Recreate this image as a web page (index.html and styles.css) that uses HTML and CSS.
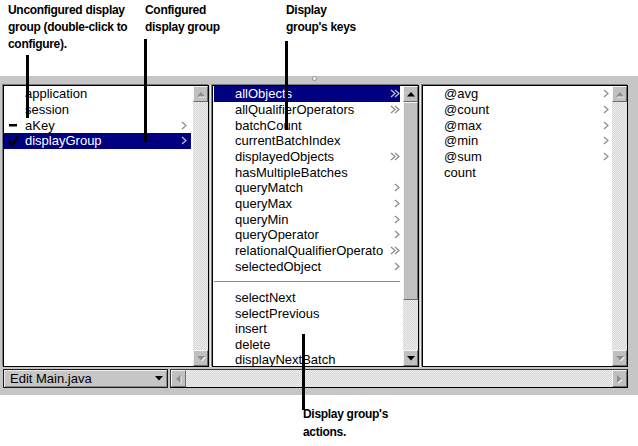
FILE: index.html
```html
<!DOCTYPE html>
<html>
<head>
<meta charset="utf-8">
<link rel="stylesheet" href="styles.css">
</head>
<body>
<header class="notes">
  <div class="note n1">Unconfigured display<br>group (double-click to<br>configure).</div>
  <div class="note n2">Configured<br>display group</div>
  <div class="note n3">Display<br>group's keys</div>
</header>

<main class="panel">
  <div class="knob-row"><span class="knob"></span></div>
  <div class="browser">
    <section class="list l1">
      <ul class="rows">
        <li class="row"><span class="mark"></span><span class="label">application</span></li>
        <li class="row"><span class="mark"></span><span class="label">session</span></li>
        <li class="row"><span class="mark"><svg width="14" height="12" viewBox="0 0 14 12"><rect x="1" y="5" width="8" height="2.5" fill="#000"/></svg></span><span class="label">aKey</span><svg class="arrow" width="6" height="9" viewBox="0 0 6 9"><path d="M1 1L5 4.5L1 8" fill="none" stroke="currentColor" stroke-width="1.2"/></svg></li>
        <li class="row sel"><span class="mark"><svg width="14" height="12" viewBox="0 0 14 12"><path d="M1 6.5L4 10.5L10 1" fill="none" stroke="#000" stroke-width="2.4"/></svg></span><span class="label">displayGroup</span><svg class="arrow" width="6" height="9" viewBox="0 0 6 9"><path d="M1 1L5 4.5L1 8" fill="none" stroke="currentColor" stroke-width="1.2"/></svg></li>
      </ul>
      <div class="vscroll">
        <div class="btn off"><svg width="8" height="5" viewBox="0 0 8 5"><polygon points="0,4.5 4,0 8,4.5"/></svg></div>
        <div class="track"></div>
        <div class="btn off"><svg width="8" height="5" viewBox="0 0 8 5"><polygon points="0,0 8,0 4,4.5"/></svg></div>
      </div>
    </section>
    <div class="split"></div>
    <section class="list l2">
      <ul class="rows">
        <li class="row sel"><span class="mark"></span><span class="label">allObjects</span><svg class="arrow dbl" width="10" height="9" viewBox="0 0 10 9"><path d="M1 1L5 4.5L1 8M5 1L9 4.5L5 8" fill="none" stroke="currentColor" stroke-width="1.2"/></svg></li>
        <li class="row"><span class="mark"></span><span class="label">allQualifierOperators</span><svg class="arrow dbl" width="10" height="9" viewBox="0 0 10 9"><path d="M1 1L5 4.5L1 8M5 1L9 4.5L5 8" fill="none" stroke="currentColor" stroke-width="1.2"/></svg></li>
        <li class="row"><span class="mark"></span><span class="label">batchCount</span></li>
        <li class="row"><span class="mark"></span><span class="label">currentBatchIndex</span></li>
        <li class="row"><span class="mark"></span><span class="label">displayedObjects</span><svg class="arrow dbl" width="10" height="9" viewBox="0 0 10 9"><path d="M1 1L5 4.5L1 8M5 1L9 4.5L5 8" fill="none" stroke="currentColor" stroke-width="1.2"/></svg></li>
        <li class="row"><span class="mark"></span><span class="label">hasMultipleBatches</span></li>
        <li class="row"><span class="mark"></span><span class="label">queryMatch</span><svg class="arrow" width="6" height="9" viewBox="0 0 6 9"><path d="M1 1L5 4.5L1 8" fill="none" stroke="currentColor" stroke-width="1.2"/></svg></li>
        <li class="row"><span class="mark"></span><span class="label">queryMax</span><svg class="arrow" width="6" height="9" viewBox="0 0 6 9"><path d="M1 1L5 4.5L1 8" fill="none" stroke="currentColor" stroke-width="1.2"/></svg></li>
        <li class="row"><span class="mark"></span><span class="label">queryMin</span><svg class="arrow" width="6" height="9" viewBox="0 0 6 9"><path d="M1 1L5 4.5L1 8" fill="none" stroke="currentColor" stroke-width="1.2"/></svg></li>
        <li class="row"><span class="mark"></span><span class="label">queryOperator</span><svg class="arrow" width="6" height="9" viewBox="0 0 6 9"><path d="M1 1L5 4.5L1 8" fill="none" stroke="currentColor" stroke-width="1.2"/></svg></li>
        <li class="row"><span class="mark"></span><span class="label">relationalQualifierOperato</span><svg class="arrow dbl" width="10" height="9" viewBox="0 0 10 9"><path d="M1 1L5 4.5L1 8M5 1L9 4.5L5 8" fill="none" stroke="currentColor" stroke-width="1.2"/></svg></li>
        <li class="row"><span class="mark"></span><span class="label">selectedObject</span><svg class="arrow" width="6" height="9" viewBox="0 0 6 9"><path d="M1 1L5 4.5L1 8" fill="none" stroke="currentColor" stroke-width="1.2"/></svg></li>
        <li class="row sep"></li>
        <li class="row"><span class="mark"></span><span class="label">selectNext</span></li>
        <li class="row"><span class="mark"></span><span class="label">selectPrevious</span></li>
        <li class="row"><span class="mark"></span><span class="label">insert</span></li>
        <li class="row"><span class="mark"></span><span class="label">delete</span></li>
        <li class="row"><span class="mark"></span><span class="label">displayNextBatch</span></li>
      </ul>
      <div class="vscroll">
        <div class="btn"><svg width="8" height="5" viewBox="0 0 8 5"><polygon points="0,4.5 4,0 8,4.5"/></svg></div>
        <div class="thumb"></div>
        <div class="track"></div>
        <div class="btn"><svg width="8" height="5" viewBox="0 0 8 5"><polygon points="0,0 8,0 4,4.5"/></svg></div>
      </div>
    </section>
    <div class="split"></div>
    <section class="list l3">
      <ul class="rows">
        <li class="row"><span class="mark"></span><span class="label">@avg</span><svg class="arrow" width="6" height="9" viewBox="0 0 6 9"><path d="M1 1L5 4.5L1 8" fill="none" stroke="currentColor" stroke-width="1.2"/></svg></li>
        <li class="row"><span class="mark"></span><span class="label">@count</span><svg class="arrow" width="6" height="9" viewBox="0 0 6 9"><path d="M1 1L5 4.5L1 8" fill="none" stroke="currentColor" stroke-width="1.2"/></svg></li>
        <li class="row"><span class="mark"></span><span class="label">@max</span><svg class="arrow" width="6" height="9" viewBox="0 0 6 9"><path d="M1 1L5 4.5L1 8" fill="none" stroke="currentColor" stroke-width="1.2"/></svg></li>
        <li class="row"><span class="mark"></span><span class="label">@min</span><svg class="arrow" width="6" height="9" viewBox="0 0 6 9"><path d="M1 1L5 4.5L1 8" fill="none" stroke="currentColor" stroke-width="1.2"/></svg></li>
        <li class="row"><span class="mark"></span><span class="label">@sum</span><svg class="arrow" width="6" height="9" viewBox="0 0 6 9"><path d="M1 1L5 4.5L1 8" fill="none" stroke="currentColor" stroke-width="1.2"/></svg></li>
        <li class="row"><span class="mark"></span><span class="label">count</span></li>
      </ul>
      <div class="vscroll">
        <div class="btn off"><svg width="8" height="5" viewBox="0 0 8 5"><polygon points="0,4.5 4,0 8,4.5"/></svg></div>
        <div class="track"></div>
        <div class="btn off"><svg width="8" height="5" viewBox="0 0 8 5"><polygon points="0,0 8,0 4,4.5"/></svg></div>
      </div>
    </section>
  </div>

  <div class="bottombar">
    <div class="popup"><span class="popup-label">Edit Main.java</span><svg width="8" height="5" viewBox="0 0 8 5"><polygon points="0,0 8,0 4,4.5" fill="#000"/></svg></div>
    <div class="hscroll">
      <div class="btn off hbtn"><svg width="5" height="8" viewBox="0 0 5 8"><polygon points="4.5,0 4.5,8 0,4"/></svg></div>
      <div class="track"></div>
      <div class="btn off hbtn"><svg width="5" height="8" viewBox="0 0 5 8"><polygon points="0,0 0,8 4.5,4"/></svg></div>
    </div>
  </div>
</main>

<footer class="notes-bottom">
  <div class="note">Display group's<br>actions.</div>
</footer>

<span class="leader ld1"></span>
<span class="leader ld2"></span>
<span class="leader ld3"></span>
<span class="leader ld4"></span>
</body>
</html>
```

FILE: styles.css
```css
* { box-sizing: border-box; margin: 0; padding: 0; }

html, body {
  width: 638px;
  height: 446px;
  overflow: hidden;
  background: #fff;
}

body {
  position: relative;
  font-family: "Liberation Sans", Arial, sans-serif;
  color: #000;
}

/* annotations */
.notes {
  height: 76px;
  display: flex;
  padding-top: 2px;
}

.note {
  font-weight: bold;
  font-size: 12px;
  line-height: 17px;
  letter-spacing: -0.3px;
  white-space: nowrap;
}

.n1 { margin-left: 8px; width: 137px; }
.n2 { width: 141px; }

.notes-bottom {
  height: 51px;
  padding-top: 10px;
  padding-left: 303px;
}

.notes-bottom .note { line-height: 18px; }

.leader {
  position: absolute;
  width: 3px;
  background: #000;
}

.ld1 { left: 26px; top: 55px; height: 63px; }
.ld2 { left: 144px; top: 39px; height: 103px; }
.ld3 { left: 285px; top: 41px; height: 89px; }
.ld4 { left: 302px; top: 334px; height: 76px; }

/* panel */
.panel {
  background: #c6c6c6;
  height: 319px;
  display: flex;
  flex-direction: column;
}

.knob-row {
  height: 9px;
  display: flex;
}

.knob {
  margin-left: 312px;
  margin-top: 0;
  width: 5px;
  height: 5px;
  border-radius: 50%;
  background: #fff;
  border: 1px solid #8a8a8a;
}

.browser {
  display: flex;
  height: 282px;
  padding-left: 3px;
}

.list {
  display: flex;
  height: 282px;
  background: #fff;
  border: 1px solid #000;
  box-shadow: -1px -1px 0 #7a7a7a;
}

.l1 { width: 206px; }
.l2 { width: 207px; }
.l3 { width: 206px; }

.split {
  width: 3px;
  display: flex;
  justify-content: center;
}

.split::before {
  content: "";
  width: 1px;
  background: #ececec;
}

.rows {
  flex: 1;
  list-style: none;
  overflow: hidden;
  min-width: 0;
}

.row {
  height: 15.667px;
  display: flex;
  align-items: center;
  font-size: 13px;
  white-space: nowrap;
  color: #000;
  margin-right: 2px;
}

.mark {
  width: 21px;
  flex: none;
  display: flex;
  align-items: center;
  padding-left: 4px;
}

.label {
  flex: 1;
  overflow: hidden;
  min-width: 0;
}

.arrow {
  flex: none;
  color: #8a8a8a;
  margin-right: 4px;
}

.l2 .row { margin-left: 1px; margin-right: 3px; }
.l2 .arrow { margin-right: 0; }
.l3 .arrow { margin-right: 1px; }

.row.sel {
  background: #000080;
  color: #fff;
}

.row.sel .arrow { color: #c8c8c8; }

.row.sep {
  margin-left: 1px;
  margin-right: 3px;
}

.row.sep::after {
  content: "";
  flex: 1;
  border-top: 1px solid #8a8a8a;
}

/* scrollbars */
.vscroll {
  width: 15px;
  flex: none;
  display: flex;
  flex-direction: column;
}

.btn {
  height: 16px;
  flex: none;
  display: flex;
  align-items: center;
  justify-content: center;
  background: #c0c0c0;
  border-top: 1px solid #f4f4f4;
  border-left: 1px solid #f4f4f4;
  border-right: 1px solid #6e6e6e;
  border-bottom: 1px solid #6e6e6e;
}

.btn svg { fill: #000; }

.btn.off svg {
  fill: #8c8c8c;
  filter: drop-shadow(1px 1px 0 #f4f4f4);
}

.thumb {
  height: 198px;
  flex: none;
  background: #c0c0c0;
  border-top: 1px solid #f4f4f4;
  border-left: 1px solid #f4f4f4;
  border-right: 1px solid #6e6e6e;
  border-bottom: 1px solid #6e6e6e;
}

.track {
  flex: 1;
  background: repeating-conic-gradient(#d6d6d6 0 25%, #eeeeee 0 50%) 0 0 / 2px 2px;
}

/* bottom bar */
.bottombar {
  margin-top: 2px;
  height: 19px;
  display: flex;
  padding-left: 3px;
}

.popup {
  width: 165px;
  display: flex;
  align-items: center;
  padding-left: 6px;
  padding-right: 4px;
  font-size: 13px;
  background: #c6c6c6;
  border: 1px solid #1a1a1a;
  box-shadow: inset 1px 1px 0 #ececec, inset -1px -1px 0 #8a8a8a;
}

.popup-label {
  flex: 1;
  white-space: nowrap;
}

.hscroll {
  margin-left: 2px;
  width: 458px;
  display: flex;
  border: 1px solid #000;
  border-top-color: #3a3a3a;
  border-left-color: #3a3a3a;
}

.hbtn {
  width: 15px;
  height: auto;
}
```
